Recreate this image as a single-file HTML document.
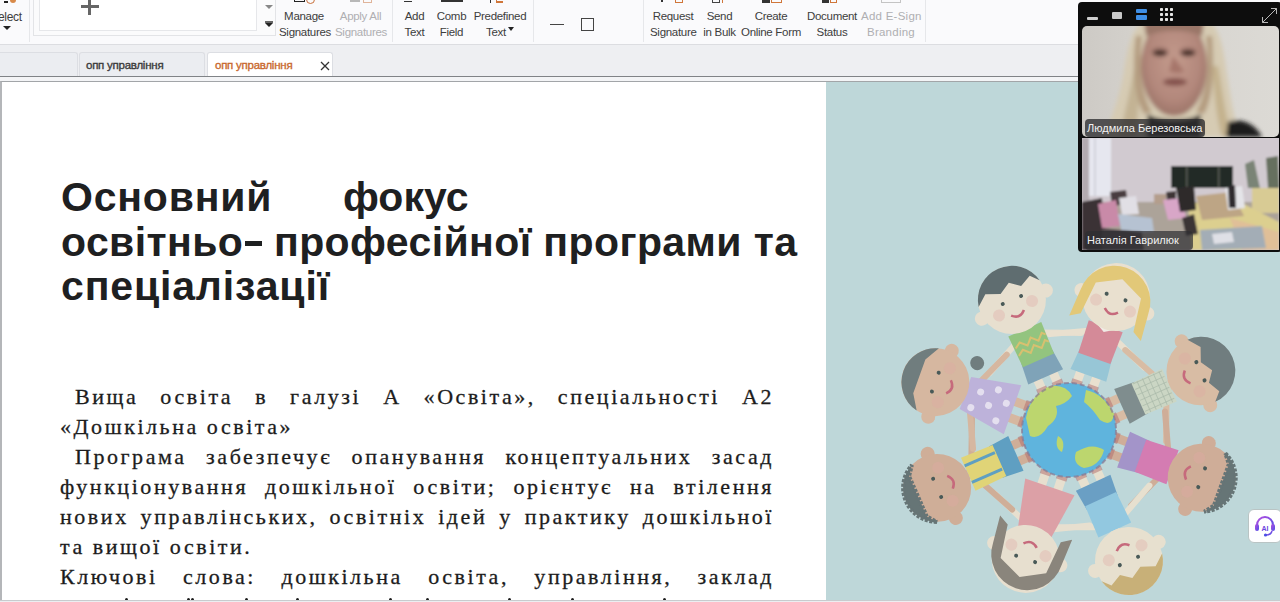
<!DOCTYPE html>
<html><head><meta charset="utf-8">
<style>
*{margin:0;padding:0;box-sizing:border-box}
html,body{width:1280px;height:602px;overflow:hidden;background:#eef0f3;font-family:"Liberation Sans",sans-serif}
.abs{position:absolute}
#toolbar{position:absolute;left:0;top:0;width:1280px;height:45px;background:#fafafc;border-bottom:1px solid #dcdde1}
.lbl{position:absolute;font-size:11.5px;line-height:15.5px;color:#3d3d3d;letter-spacing:-0.3px;text-align:center;white-space:nowrap}
.gray{color:#afafb2}
.sep{position:absolute;top:0;width:1px;height:42px;background:#e6e7ea}
#tabbar{position:absolute;left:0;top:45px;width:1280px;height:36px;background:#eeeff2}
.tab{position:absolute;top:7px;height:24px;background:#ebedf1;border:1px solid #dcdee3;border-bottom:none;border-radius:3px 3px 0 0;font-size:11.5px;line-height:25px;color:#3a3a3a;font-weight:normal;letter-spacing:-0.25px;-webkit-text-stroke:0.35px}
#page{position:absolute;left:0;top:81px;width:1280px;height:519px;background:#fff;border-top:1px solid #a2a5a8;border-left:2px solid #b4b6b9}
#bottom{position:absolute;left:0;top:600px;width:1280px;height:2px;background:#eceef1;border-top:1px solid #c9cbce}
.tl{position:absolute;left:59px;font-family:"Liberation Sans",sans-serif;font-weight:bold;font-size:41px;line-height:44px;color:#1e2021;white-space:nowrap}
.bl{position:absolute;left:58px;width:714px;font-family:"Liberation Serif",serif;font-size:22px;line-height:30px;color:#1c1c1c;letter-spacing:2.55px;-webkit-text-stroke:0.3px #1c1c1c;white-space:nowrap}
.j{text-align:justify;text-align-last:justify}
</style></head><body>
<div id="toolbar">
  <div class="abs" style="left:4px;top:1px;width:4px;height:2px;background:#222"></div><div class="abs" style="left:10px;top:-2px;width:6px;height:5px;background:#d88a4a;border-radius:0 0 3px 3px"></div>
  <div class="abs" style="left:294px;top:-2px;width:11px;height:4px;border:1.5px solid #222;border-top:none"></div><div class="abs" style="left:306px;top:-5px;width:9px;height:9px;border:1.5px solid #c8703a;border-radius:50%"></div>
  <div class="abs" style="left:350px;top:0;width:10px;height:2px;background:#b8b8b8"></div><div class="abs" style="left:363px;top:-3px;width:9px;height:6px;border:1px solid #e0b49a"></div>
  <div class="abs" style="left:404px;top:0;width:8px;height:2px;border-bottom:1px solid #333"></div>
  <div class="abs" style="left:441px;top:0;width:22px;height:2px;background:#333"></div>
  <div class="abs" style="left:490px;top:0;width:1px;height:3px;background:#333"></div><div class="abs" style="left:496px;top:0;width:7px;height:3px;border-bottom:2px solid #d0763a;border-left:1px solid #d0763a"></div>
  <div class="abs" style="left:661px;top:0;width:2px;height:2px;background:#333"></div><div class="abs" style="left:675px;top:-3px;width:8px;height:6px;border:1.5px solid #d0763a"></div>
  <div class="abs" style="left:712px;top:-3px;width:8px;height:6px;border:1px solid #444;border-top:none"></div><div class="abs" style="left:722px;top:0;width:6px;height:3px;border-left:1.5px solid #d0763a"></div>
  <div class="abs" style="left:762px;top:0;width:8px;height:3px;background:#333"></div><div class="abs" style="left:771px;top:-3px;width:11px;height:6px;border:1.5px solid #d0763a"></div>
  <div class="abs" style="left:822px;top:0;width:7px;height:3px;background:#333"></div><div class="abs" style="left:830px;top:-3px;width:7px;height:6px;border:1.5px solid #d0763a"></div>
  <div class="abs" style="left:881px;top:-3px;width:20px;height:6px;border:1px solid #c4c4c4"></div>
  <div class="lbl" style="left:-2px;top:10px;text-align:left;font-size:12px">elect</div>
  <div class="abs" style="left:3px;top:26px;width:0;height:0;border-left:4px solid transparent;border-right:4px solid transparent;border-top:4px solid #222"></div>
  <div class="sep" style="left:29px"></div>
  <div class="abs" style="left:33px;top:-2px;width:243px;height:38px;border:1px solid #e3e4e7;background:#fbfbfc"></div>
  <div class="abs" style="left:39px;top:-2px;width:218px;height:33px;border:1px solid #e6e7ea;background:#fff"></div>
  <div class="abs" style="left:81px;top:5px;width:18px;height:3px;background:#666"></div>
  <div class="abs" style="left:88px;top:-2px;width:3px;height:17px;background:#666"></div>
  <div class="abs" style="left:265px;top:5px;width:0;height:0;border-left:4px solid transparent;border-right:4px solid transparent;border-top:4px solid #888"></div>
  <div class="abs" style="left:265px;top:21px;width:8px;height:2px;background:#666"></div>
  <div class="abs" style="left:265px;top:23px;width:0;height:0;border-left:4px solid transparent;border-right:4px solid transparent;border-top:4px solid #222"></div>
  <div class="lbl" style="left:279px;top:9px;width:50px">Manage<br>Signatures</div>
  <div class="lbl gray" style="left:335px;top:9px;width:51px">Apply All<br>Signatures</div>
  <div class="sep" style="left:392px"></div>
  <div class="lbl" style="left:402px;top:9px;width:25px">Add<br>Text</div>
  <div class="lbl" style="left:436px;top:9px;width:31px">Comb<br>Field</div>
  <div class="lbl" style="left:473px;top:9px;width:54px">Predefined<br>Text<span style="display:inline-block;margin-left:2px;width:0;height:0;border-left:3.5px solid transparent;border-right:3.5px solid transparent;border-top:4px solid #222;vertical-align:5px"></span></div>
  <div class="sep" style="left:533px"></div>
  <div class="abs" style="left:550px;top:24px;width:14px;height:1px;background:#444"></div>
  <div class="abs" style="left:581px;top:18px;width:13px;height:13px;border:1px solid #444"></div>
  <div class="sep" style="left:643px"></div>
  <div class="lbl" style="left:650px;top:9px;width:46px">Request<br>Signature</div>
  <div class="lbl" style="left:702px;top:9px;width:35px">Send<br>in Bulk</div>
  <div class="lbl" style="left:741px;top:9px;width:60px">Create<br>Online Form</div>
  <div class="lbl" style="left:806px;top:9px;width:52px">Document<br>Status</div>
  <div class="lbl gray" style="left:861px;top:9px;width:60px;letter-spacing:0.25px">Add E-Sign<br>Branding</div>
  <div class="sep" style="left:925px"></div>
</div>
<div id="tabbar">
  <div class="tab" style="left:-4px;width:82px"></div>
  <div class="tab" style="left:79px;width:126px;padding-left:6px">опп управління</div>
  <div class="tab" style="left:207px;width:126px;padding-left:7px;background:#fff;color:#c8682e">опп управління<svg style="position:absolute;left:112px;top:8px" width="10" height="10" viewBox="0 0 10 10"><path d="M1 1L9 9M9 1L1 9" stroke="#333" stroke-width="1.3"/></svg></div>
  <div class="abs" style="left:0;top:31px;width:1280px;height:1px;background:#808387"></div><div class="abs" style="left:0;top:32px;width:1280px;height:4px;background:#f3f4f6"></div>
</div>
<div id="page">
  <div class="abs" style="left:824px;top:0;width:456px;height:519px;background:#bed7d9"></div>
  <div id="title">
    <div class="tl" style="top:93px;letter-spacing:0.8px">Основний</div>
    <div class="tl" style="top:93px;left:341px;letter-spacing:0px">фокус</div>
    <div class="tl" style="top:138px;letter-spacing:0.4px">освітньо<span style="display:inline-block;width:17px;height:5px;background:#1e2021;vertical-align:10px;margin:0 0 0 2px"></span> професійної програми та</div>
    <div class="tl" style="top:182px;letter-spacing:0.85px">спеціалізації</div>
  </div>
  <div id="body">
    <div class="bl j" style="top:300px"><span style="display:inline-block;width:15px"></span>Вища освіта в галузі А «Освіта», спеціальності А2</div>
    <div class="bl" style="top:330px">«Дошкільна освіта»</div>
    <div class="bl j" style="top:360px"><span style="display:inline-block;width:15px"></span>Програма забезпечує опанування концептуальних засад</div>
    <div class="bl j" style="top:390px">функціонування дошкільної освіти; орієнтує на втілення</div>
    <div class="bl j" style="top:420px">нових управлінських, освітніх ідей у практику дошкільної</div>
    <div class="bl" style="top:450px">та вищої освіти.</div>
    <div class="bl j" style="top:480px">Ключові слова: дошкільна освіта, управління, заклад</div>
    <div class="abs" style="left:123.0px;top:516px;width:3px;height:3px;border-radius:50%;background:#1c1c1c"></div><div class="abs" style="left:185.0px;top:516px;width:3px;height:3px;border-radius:50%;background:#1c1c1c"></div><div class="abs" style="left:188.5px;top:516px;width:3px;height:3px;border-radius:50%;background:#1c1c1c"></div><div class="abs" style="left:242.5px;top:516px;width:3px;height:3px;border-radius:50%;background:#1c1c1c"></div><div class="abs" style="left:293.5px;top:516px;width:3px;height:3px;border-radius:50%;background:#1c1c1c"></div><div class="abs" style="left:387.0px;top:516px;width:3px;height:3px;border-radius:50%;background:#1c1c1c"></div><div class="abs" style="left:423.5px;top:516px;width:3px;height:3px;border-radius:50%;background:#1c1c1c"></div><div class="abs" style="left:505.5px;top:516px;width:3px;height:3px;border-radius:50%;background:#1c1c1c"></div><div class="abs" style="left:568.5px;top:516px;width:3px;height:3px;border-radius:50%;background:#1c1c1c"></div><div class="abs" style="left:660.5px;top:516px;width:3px;height:3px;border-radius:50%;background:#1c1c1c"></div>
  </div>
</div>
<!--KIDS--><svg class="abs" style="left:0;top:0" width="1280" height="602" viewBox="0 0 1280 602">
<defs><filter id="soft" x="-5%" y="-5%" width="110%" height="110%"><feGaussianBlur stdDeviation="0.7"/></filter><clipPath id="pg"><rect x="826" y="83" width="454" height="517"/></clipPath></defs>
<g clip-path="url(#pg)" filter="url(#soft)">
<g transform="translate(1069 430) rotate(-23.7)">
<path d="M-15 -100 L-50 -84 M15 -100 L50 -84" stroke="#e7dfcf" stroke-width="6" stroke-linecap="round" fill="none"/>
<rect x="-13" y="-62" width="9" height="16" fill="#e7dfcf"/><rect x="4" y="-62" width="9" height="16" fill="#e7dfcf"/>
<rect x="-14" y="-50" width="11" height="5" fill="#b06a6a" opacity="0.5"/><rect x="3" y="-50" width="11" height="5" fill="#b06a6a" opacity="0.5"/>
<path d="M-17 -80 L17 -80 L19 -58 L-19 -58 Z" fill="#7fa3b8"/>
<path d="M-18 -110 L18 -110 L17 -76 L-17 -76 Z" fill="#93c47f"/>
<path d="M-16 -96 L-10 -100 L-4 -94 L2 -100 L8 -94 L14 -100 L17 -97 M-16 -88 L-10 -92 L-4 -86 L2 -92 L8 -86 L14 -92 L17 -89" stroke="#d8c070" stroke-width="2" fill="none"/>
<rect x="-5" y="-118" width="10" height="8" fill="#e7dfcf"/>
<g transform="translate(0 3)">
<circle cx="-35" cy="-140" r="7" fill="#e7dfcf"/><circle cx="35" cy="-140" r="7" fill="#e7dfcf"/>
<circle cx="0" cy="-145" r="34" fill="#e7dfcf"/>
<path d="M-33.3 -152 A34 34 0 0 1 33.3 -152 L26 -160 L14 -154 L4 -162 L-8 -155 L-22 -161 Z" fill="#5f6d70"/>
<circle cx="-18" cy="-136" r="6" fill="#e0aaa4" opacity="0.35"/><circle cx="18" cy="-136" r="6" fill="#e0aaa4" opacity="0.35"/>
<circle cx="-10" cy="-145" r="2" fill="#4a5a58"/><circle cx="10" cy="-145" r="2" fill="#4a5a58"/>
<path d="M-7 -131 Q0 -124 7 -131" stroke="#c66a7c" stroke-width="2.5" fill="none"/>
</g>
</g>
<g transform="translate(1069 430) rotate(19.5)">
<path d="M-15 -100 L-50 -84 M15 -100 L50 -84" stroke="#e9e0cf" stroke-width="6" stroke-linecap="round" fill="none"/>
<rect x="-13" y="-62" width="9" height="16" fill="#e9e0cf"/><rect x="4" y="-62" width="9" height="16" fill="#e9e0cf"/>
<rect x="-14" y="-50" width="11" height="5" fill="#b06a6a" opacity="0.5"/><rect x="3" y="-50" width="11" height="5" fill="#b06a6a" opacity="0.5"/>
<path d="M-17 -80 L17 -80 L19 -58 L-19 -58 Z" fill="#97c6d6"/>
<path d="M-18 -110 L18 -110 L17 -76 L-17 -76 Z" fill="#d48a98"/>
<path d="M-10 -110 L0 -104 L10 -110 Z" fill="#f0ece6"/>
<rect x="-5" y="-118" width="10" height="8" fill="#e9e0cf"/>
<g transform="translate(0 4)">
<circle cx="-35" cy="-140" r="7" fill="#e9e0cf"/><circle cx="35" cy="-140" r="7" fill="#e9e0cf"/>
<circle cx="0" cy="-145" r="34" fill="#e9e0cf"/>
<path d="M-36 -140 A36 36 0 0 1 36 -140 L38 -112 L28 -118 L24 -152 L0 -164 L-24 -152 L-28 -118 L-38 -112 Z" fill="#e2c878"/>
<circle cx="-18" cy="-136" r="6" fill="#e0aaa4" opacity="0.35"/><circle cx="18" cy="-136" r="6" fill="#e0aaa4" opacity="0.35"/>
<circle cx="-10" cy="-145" r="2" fill="#4a5a58"/><circle cx="10" cy="-145" r="2" fill="#4a5a58"/>
<path d="M-7 -131 Q0 -124 7 -131" stroke="#c66a7c" stroke-width="2.5" fill="none"/>
</g>
</g>
<g transform="translate(1069 430) rotate(65.9)">
<path d="M-15 -100 L-50 -84 M15 -100 L50 -84" stroke="#d8bca4" stroke-width="6" stroke-linecap="round" fill="none"/>
<rect x="-13" y="-62" width="9" height="16" fill="#d8bca4"/><rect x="4" y="-62" width="9" height="16" fill="#d8bca4"/>
<rect x="-14" y="-50" width="11" height="5" fill="#b06a6a" opacity="0.5"/><rect x="3" y="-50" width="11" height="5" fill="#b06a6a" opacity="0.5"/>
<path d="M-17 -80 L17 -80 L19 -58 L-19 -58 Z" fill="#7f8d8e"/>
<path d="M-18 -110 L18 -110 L17 -76 L-17 -76 Z" fill="#cbd6c4"/>
<line x1="-16" y1="-109" x2="-16" y2="-77" stroke="#a8b8a8" stroke-width="1" opacity="0.7"/>
<line x1="-10" y1="-109" x2="-10" y2="-77" stroke="#a8b8a8" stroke-width="1" opacity="0.7"/>
<line x1="-4" y1="-109" x2="-4" y2="-77" stroke="#a8b8a8" stroke-width="1" opacity="0.7"/>
<line x1="2" y1="-109" x2="2" y2="-77" stroke="#a8b8a8" stroke-width="1" opacity="0.7"/>
<line x1="8" y1="-109" x2="8" y2="-77" stroke="#a8b8a8" stroke-width="1" opacity="0.7"/>
<line x1="14" y1="-109" x2="14" y2="-77" stroke="#a8b8a8" stroke-width="1" opacity="0.7"/>
<line x1="-17" y1="-106" x2="17" y2="-106" stroke="#a8b8a8" stroke-width="1" opacity="0.7"/>
<line x1="-17" y1="-100" x2="17" y2="-100" stroke="#a8b8a8" stroke-width="1" opacity="0.7"/>
<line x1="-17" y1="-94" x2="17" y2="-94" stroke="#a8b8a8" stroke-width="1" opacity="0.7"/>
<line x1="-17" y1="-88" x2="17" y2="-88" stroke="#a8b8a8" stroke-width="1" opacity="0.7"/>
<line x1="-17" y1="-82" x2="17" y2="-82" stroke="#a8b8a8" stroke-width="1" opacity="0.7"/>
<rect x="-5" y="-118" width="10" height="8" fill="#d8bca4"/>
<g transform="translate(0 1)">
<circle cx="-35" cy="-140" r="7" fill="#d8bca4"/><circle cx="35" cy="-140" r="7" fill="#d8bca4"/>
<circle cx="0" cy="-145" r="34" fill="#d8bca4"/>
<path d="M-34.0 -146 A34 34 0 0 1 34.0 -146 L26 -154 L14 -148 L4 -156 L-8 -149 L-22 -155 Z" fill="#707d7f"/>
<circle cx="-18" cy="-136" r="6" fill="#e0aaa4" opacity="0.35"/><circle cx="18" cy="-136" r="6" fill="#e0aaa4" opacity="0.35"/>
<circle cx="-10" cy="-145" r="2" fill="#4a5a58"/><circle cx="10" cy="-145" r="2" fill="#4a5a58"/>
<path d="M-7 -131 Q0 -124 7 -131" stroke="#c66a7c" stroke-width="2.5" fill="none"/>
</g>
</g>
<g transform="translate(1069 430) rotate(109.8)">
<path d="M-15 -100 L-50 -84 M15 -100 L50 -84" stroke="#cfad98" stroke-width="6" stroke-linecap="round" fill="none"/>
<rect x="-13" y="-62" width="9" height="16" fill="#cfad98"/><rect x="4" y="-62" width="9" height="16" fill="#cfad98"/>
<rect x="-14" y="-50" width="11" height="5" fill="#b06a6a" opacity="0.5"/><rect x="3" y="-50" width="11" height="5" fill="#b06a6a" opacity="0.5"/>
<path d="M-17 -80 L17 -80 L19 -58 L-19 -58 Z" fill="#a394c9"/>
<path d="M-18 -110 L18 -110 L17 -76 L-17 -76 Z" fill="#d47bb2"/>
<rect x="-5" y="-118" width="10" height="8" fill="#cfad98"/>
<g transform="translate(0 4)">
<circle cx="-35" cy="-140" r="7" fill="#cfad98"/><circle cx="35" cy="-140" r="7" fill="#cfad98"/>
<circle cx="0" cy="-145" r="34" fill="#cfad98"/>
<path d="M-31 -159 A34 34 0 0 1 31 -159 L22 -166 L-22 -166 Z" fill="#667476" stroke="#667476" stroke-width="4" stroke-dasharray="3 1.5"/>
<circle cx="-18" cy="-136" r="6" fill="#e0aaa4" opacity="0.35"/><circle cx="18" cy="-136" r="6" fill="#e0aaa4" opacity="0.35"/>
<circle cx="-10" cy="-145" r="2" fill="#4a5a58"/><circle cx="10" cy="-145" r="2" fill="#4a5a58"/>
<path d="M-7 -131 Q0 -124 7 -131" stroke="#c66a7c" stroke-width="2.5" fill="none"/>
</g>
</g>
<g transform="translate(1069 430) rotate(155.4)">
<path d="M-15 -100 L-50 -84 M15 -100 L50 -84" stroke="#e7e0cf" stroke-width="6" stroke-linecap="round" fill="none"/>
<rect x="-13" y="-62" width="9" height="16" fill="#e7e0cf"/><rect x="4" y="-62" width="9" height="16" fill="#e7e0cf"/>
<rect x="-14" y="-50" width="11" height="5" fill="#b06a6a" opacity="0.5"/><rect x="3" y="-50" width="11" height="5" fill="#b06a6a" opacity="0.5"/>
<path d="M-17 -80 L17 -80 L19 -58 L-19 -58 Z" fill="#6a9fc4"/>
<path d="M-18 -110 L18 -110 L17 -76 L-17 -76 Z" fill="#92c8e0"/>
<rect x="-5" y="-118" width="10" height="8" fill="#e7e0cf"/>
<g transform="translate(0 1)">
<circle cx="-35" cy="-140" r="7" fill="#e7e0cf"/><circle cx="35" cy="-140" r="7" fill="#e7e0cf"/>
<circle cx="0" cy="-145" r="34" fill="#e7e0cf"/>
<path d="M-33.3 -152 A34 34 0 0 1 33.3 -152 L26 -160 L14 -154 L4 -162 L-8 -155 L-22 -161 Z" fill="#c8b078"/>
<circle cx="-18" cy="-136" r="6" fill="#e0aaa4" opacity="0.35"/><circle cx="18" cy="-136" r="6" fill="#e0aaa4" opacity="0.35"/>
<circle cx="-10" cy="-145" r="2" fill="#4a5a58"/><circle cx="10" cy="-145" r="2" fill="#4a5a58"/>
<path d="M-7 -131 Q0 -124 7 -131" stroke="#c66a7c" stroke-width="2.5" fill="none"/>
</g>
</g>
<g transform="translate(1069 430) rotate(-161.4)">
<path d="M-15 -100 L-50 -84 M15 -100 L50 -84" stroke="#e7dfcf" stroke-width="6" stroke-linecap="round" fill="none"/>
<rect x="-13" y="-62" width="9" height="16" fill="#e7dfcf"/><rect x="4" y="-62" width="9" height="16" fill="#e7dfcf"/>
<rect x="-14" y="-50" width="11" height="5" fill="#b06a6a" opacity="0.5"/><rect x="3" y="-50" width="11" height="5" fill="#b06a6a" opacity="0.5"/>
<path d="M-17 -110 L17 -110 L26 -60 L-26 -60 Z" fill="#dca0a6"/>
<rect x="-5" y="-118" width="10" height="8" fill="#e7dfcf"/>
<g transform="translate(0 9)">
<circle cx="-35" cy="-140" r="7" fill="#e7dfcf"/><circle cx="35" cy="-140" r="7" fill="#e7dfcf"/>
<circle cx="0" cy="-145" r="34" fill="#e7dfcf"/>
<path d="M-36 -140 A36 36 0 0 1 36 -140 L38 -112 L28 -118 L24 -152 L0 -164 L-24 -152 L-28 -118 L-38 -112 Z" fill="#8a857c"/>
<circle cx="-18" cy="-136" r="6" fill="#e0aaa4" opacity="0.35"/><circle cx="18" cy="-136" r="6" fill="#e0aaa4" opacity="0.35"/>
<circle cx="-10" cy="-145" r="2" fill="#4a5a58"/><circle cx="10" cy="-145" r="2" fill="#4a5a58"/>
<path d="M-7 -131 Q0 -124 7 -131" stroke="#c66a7c" stroke-width="2.5" fill="none"/>
</g>
</g>
<g transform="translate(1069 430) rotate(-113.7)">
<path d="M-15 -100 L-50 -84 M15 -100 L50 -84" stroke="#cfae98" stroke-width="6" stroke-linecap="round" fill="none"/>
<rect x="-13" y="-62" width="9" height="16" fill="#cfae98"/><rect x="4" y="-62" width="9" height="16" fill="#cfae98"/>
<rect x="-14" y="-50" width="11" height="5" fill="#b06a6a" opacity="0.5"/><rect x="3" y="-50" width="11" height="5" fill="#b06a6a" opacity="0.5"/>
<path d="M-17 -80 L17 -80 L19 -58 L-19 -58 Z" fill="#5e9fc2"/>
<path d="M-18 -110 L18 -110 L17 -76 L-17 -76 Z" fill="#e0d477"/>
<line x1="-9" y1="-110" x2="-9" y2="-77" stroke="#5e9fc2" stroke-width="3"/><line x1="9" y1="-110" x2="9" y2="-77" stroke="#5e9fc2" stroke-width="3"/>
<rect x="-5" y="-118" width="10" height="8" fill="#cfae98"/>
<g transform="translate(0 1)">
<circle cx="-35" cy="-140" r="7" fill="#cfae98"/><circle cx="35" cy="-140" r="7" fill="#cfae98"/>
<circle cx="0" cy="-145" r="34" fill="#cfae98"/>
<path d="M-31 -159 A34 34 0 0 1 31 -159 L22 -166 L-22 -166 Z" fill="#667476" stroke="#667476" stroke-width="4" stroke-dasharray="3 1.5"/>
<circle cx="-18" cy="-136" r="6" fill="#e0aaa4" opacity="0.35"/><circle cx="18" cy="-136" r="6" fill="#e0aaa4" opacity="0.35"/>
<circle cx="-10" cy="-145" r="2" fill="#4a5a58"/><circle cx="10" cy="-145" r="2" fill="#4a5a58"/>
<path d="M-7 -131 Q0 -124 7 -131" stroke="#c66a7c" stroke-width="2.5" fill="none"/>
</g>
</g>
<g transform="translate(1069 430) rotate(-70.3)">
<path d="M-15 -100 L-50 -84 M15 -100 L50 -84" stroke="#d6b7a0" stroke-width="6" stroke-linecap="round" fill="none"/>
<rect x="-13" y="-62" width="9" height="16" fill="#d6b7a0"/><rect x="4" y="-62" width="9" height="16" fill="#d6b7a0"/>
<rect x="-14" y="-50" width="11" height="5" fill="#b06a6a" opacity="0.5"/><rect x="3" y="-50" width="11" height="5" fill="#b06a6a" opacity="0.5"/>
<path d="M-17 -110 L17 -110 L26 -60 L-26 -60 Z" fill="#bdb2da"/>
<circle cx="-12" cy="-100" r="3.5" fill="#eeeaf4" opacity="0.8"/>
<circle cx="6" cy="-96" r="3.5" fill="#eeeaf4" opacity="0.8"/>
<circle cx="-4" cy="-84" r="3.5" fill="#eeeaf4" opacity="0.8"/>
<circle cx="14" cy="-80" r="3.5" fill="#eeeaf4" opacity="0.8"/>
<circle cx="-16" cy="-72" r="3.5" fill="#eeeaf4" opacity="0.8"/>
<circle cx="4" cy="-68" r="3.5" fill="#eeeaf4" opacity="0.8"/>
<rect x="-5" y="-118" width="10" height="8" fill="#d6b7a0"/>
<g transform="translate(0 3)">
<circle cx="-35" cy="-140" r="7" fill="#d6b7a0"/><circle cx="35" cy="-140" r="7" fill="#d6b7a0"/>
<circle cx="0" cy="-145" r="34" fill="#d6b7a0"/>
<path d="M-33 -153 A34 34 0 0 1 33 -153 L18 -162 L-18 -162 Z" fill="#6f7d7e"/>
<circle cx="32" cy="-112" r="7" fill="#6f7d7e"/>
<circle cx="-18" cy="-136" r="6" fill="#e0aaa4" opacity="0.35"/><circle cx="18" cy="-136" r="6" fill="#e0aaa4" opacity="0.35"/>
<circle cx="-10" cy="-145" r="2" fill="#4a5a58"/><circle cx="10" cy="-145" r="2" fill="#4a5a58"/>
<path d="M-7 -131 Q0 -124 7 -131" stroke="#c66a7c" stroke-width="2.5" fill="none"/>
</g>
</g>
<circle cx="1069" cy="430" r="47" fill="#5fb4dd"/>
<path d="M1026 418 Q1030 395 1050 386 Q1066 384 1072 396 Q1066 404 1056 406 Q1060 418 1048 426 Q1040 440 1030 436 Z" fill="#bcd66e"/>
<path d="M1076 452 Q1092 442 1104 450 Q1100 466 1084 468 Q1072 464 1076 452 Z" fill="#bcd66e"/>
<path d="M1086 390 Q1104 394 1114 414 Q1112 428 1100 420 Q1092 408 1084 402 Z" fill="#bcd66e"/>
<path d="M1058 436 Q1066 440 1062 452 Q1054 448 1058 436 Z" fill="#bcd66e"/>
<circle cx="1069" cy="430" r="47" fill="none" stroke="#8a7890" stroke-width="2" stroke-dasharray="5 3" opacity="0.7"/>
</g></svg><!--/KIDS-->
<div id="bottom"></div>
<!--VIDEO--><div id="video" class="abs" style="left:1078px;top:2px;width:204px;height:250px;background:#0d0d0d;border-radius:4px;overflow:hidden">
  <div class="abs" style="left:9px;top:15px;width:11px;height:3px;background:#cfcfcf;border-radius:1px"></div>
  <div class="abs" style="left:34px;top:10px;width:10px;height:7px;background:#c8c8c8;border-radius:1px"></div>
  <div class="abs" style="left:58px;top:7px;width:11px;height:4px;background:#3f8fe6;border-radius:1px"></div>
  <div class="abs" style="left:58px;top:13px;width:11px;height:5px;background:#3f8fe6;border-radius:1px"></div>
  <svg class="abs" style="left:82px;top:6px" width="14" height="14" viewBox="0 0 14 14"><g fill="#e6e6e6"><rect x="0" y="0" width="3" height="3" rx="0.8"/><rect x="5" y="0" width="3" height="3" rx="0.8"/><rect x="10" y="0" width="3" height="3" rx="0.8"/><rect x="0" y="5" width="3" height="3" rx="0.8"/><rect x="5" y="5" width="3" height="3" rx="0.8"/><rect x="10" y="5" width="3" height="3" rx="0.8"/><rect x="0" y="10" width="3" height="3" rx="0.8"/><rect x="5" y="10" width="3" height="3" rx="0.8"/><rect x="10" y="10" width="3" height="3" rx="0.8"/></g></svg>
  <svg class="abs" style="left:182px;top:3px" width="18" height="19" viewBox="0 0 18 19"><g stroke="#b8b8b8" stroke-width="1" fill="none"><path d="M2.5 17.5 L16.5 3.5"/><path d="M11 3.5 H16.5 V9"/><path d="M2.5 12 V17.5 H8"/></g></svg>
  <!-- video 1 -->
  <div class="abs" style="left:4px;top:24px;width:197px;height:111px;border-radius:5px;overflow:hidden;background:linear-gradient(90deg,#cdcac5 0%,#d6d3ce 35%,#dcdad5 100%)">
    <svg width="197" height="111" viewBox="0 0 197 111" style="position:absolute;left:0;top:0">
      <defs><filter id="vb"><feGaussianBlur stdDeviation="2"/></filter><radialGradient id="fg" cx="0.5" cy="0.45" r="0.55"><stop offset="0" stop-color="#c39a8c"/><stop offset="0.7" stop-color="#b3887c"/><stop offset="1" stop-color="#9c7468"/></radialGradient></defs>
      <g filter="url(#vb)">
        <path d="M22 111 C30 90 38 70 42 45 C46 20 50 2 62 -4 L128 -4 C140 5 142 30 146 55 C150 80 152 95 160 111 Z" fill="#d6cbb3"/>
        <path d="M40 100 C44 80 50 60 54 30 L62 30 C58 60 56 85 54 111 L38 111 Z" fill="#c3b394"/>
        <path d="M136 40 C140 60 142 85 150 111 L140 111 C134 90 132 65 130 40 Z" fill="#c4b28e"/>
        <ellipse cx="92" cy="40" rx="33" ry="50" fill="url(#fg)"/>
        <path d="M62 -4 L122 -4 L120 10 C104 3 80 3 64 10 Z" fill="#9a7668"/>
        <path d="M60 10 C56 40 60 70 70 86 L62 88 C52 70 50 40 54 10 Z" fill="#b49c80"/>
        <path d="M124 10 C128 40 124 70 114 86 L122 88 C132 70 132 40 130 10 Z" fill="#b49c80"/>
        <ellipse cx="78" cy="26" rx="9" ry="5" fill="#9a7066" opacity="0.8"/><ellipse cx="78" cy="27" rx="7" ry="3.2" fill="#4a302c"/>
        <ellipse cx="106" cy="26" rx="9" ry="5" fill="#9a7066" opacity="0.8"/><ellipse cx="106" cy="27" rx="7" ry="3.2" fill="#4a302c"/>
        <path d="M91 30 L87 45 C92 48 99 48 102 45 Z" fill="#a6766a"/>
        <ellipse cx="93" cy="56" rx="12" ry="4" fill="#85534e"/>
        <path d="M66 88 C76 96 108 96 118 88 L120 111 L64 111 Z" fill="#231e1e"/>
        <path d="M146 96 C158 92 172 96 180 111 L144 111 Z" fill="#1f1c1c"/>
      </g>
    </svg>
    <div class="abs" style="left:3px;top:93px;width:120px;height:18px;background:rgba(45,45,48,0.78);border-radius:4px"></div>
    <div class="abs" style="left:5px;top:95px;font-size:11px;line-height:14px;color:#f2f2f2;white-space:nowrap">Людмила Березовська</div>
  </div>
  <!-- video 2 -->
  <div class="abs" style="left:4px;top:136px;width:197px;height:112px;overflow:hidden;background:#cfc8ce">
    <svg width="197" height="112" viewBox="0 0 197 112" style="position:absolute;left:0;top:0">
      <defs><filter id="vb2" x="-10%" y="-10%" width="120%" height="120%"><feGaussianBlur stdDeviation="1.3"/></filter></defs>
      <g filter="url(#vb2)">
        <rect x="0" y="0" width="197" height="70" fill="#d1cad0"/>
        <rect x="0" y="0" width="7" height="112" fill="#b3abb0"/>
        <rect x="7" y="0" width="22" height="58" fill="#e6e7ef"/>
        <rect x="12" y="0" width="2" height="58" fill="#d2d3dc"/>
        <rect x="89" y="28" width="62" height="22" fill="#202a28"/>
        <rect x="104" y="28" width="1.5" height="22" fill="#5a5c55"/><rect x="136" y="28" width="1.5" height="22" fill="#5a5c55"/>
        <rect x="0" y="64" width="197" height="48" fill="#aca399"/>
        <path d="M163 26 L172 22 L178 50 L166 50 Z" fill="#7a8476"/>
        <path d="M184 20 L196 18 L197 50 L186 50 Z" fill="#66705f"/>
        <rect x="170" y="50" width="27" height="25" fill="#d8cb94"/>
        <path d="M106 66 L150 60 L197 84 L197 112 L110 112 Z" fill="#dccf8f"/>
        <path d="M148 80 L197 94 L197 112 L160 112 Z" fill="#e0bf98"/>
        <path d="M114 58 L150 54 L162 78 L120 82 Z" fill="#bda585"/>
        <path d="M118 92 L180 88 L184 110 L120 112 Z" fill="#a3adb6"/>
        <path d="M130 96 L150 94 L152 104 L132 106 Z" fill="#dfe0e6"/>
        <rect x="72" y="56" width="12" height="10" fill="#b49e8c"/>
        <path d="M0 64 L20 60 L24 112 L0 112 Z" fill="#3a3236"/>
        <path d="M28 54 L44 52 L46 66 L30 68 Z" fill="#4a3e40"/>
        <path d="M16 66 L34 62 L38 88 L20 90 Z" fill="#c98aa8"/>
        <path d="M37 60 L54 58 L57 76 L40 77 Z" fill="#e1dfe5"/>
        <path d="M36 76 L70 80 L72 94 L40 96 Z" fill="#b6c2d2"/>
        <path d="M20 90 L60 94 L62 112 L20 112 Z" fill="#4e4548"/>
        <path d="M84 54 L94 53 L94 62 L85 63 Z" fill="#3e3436"/>
        <path d="M81 62 L100 60 L104 80 L86 82 Z" fill="#d8a6c7"/>
        <path d="M94 50 L112 48 L114 72 L98 74 Z" fill="#2f2a2c"/>
        <path d="M100 80 L112 76 L116 96 L104 98 Z" fill="#3a3436"/>
        <path d="M143 50 L160 48 L163 70 L146 72 Z" fill="#e4e4e8"/>
        <path d="M146 48 L153 47 L154 70 L147 70 Z" fill="#2e2b2d"/>
      </g>
    </svg>
    <div class="abs" style="left:3px;top:93px;width:108px;height:19px;background:rgba(45,45,50,0.7);border-radius:4px"></div>
    <div class="abs" style="left:5px;top:95px;font-size:11px;line-height:14px;color:#f2f2f2;white-space:nowrap">Наталія Гаврилюк</div>
  </div>
</div>
<div class="abs" style="left:1248px;top:509px;width:34px;height:34px;background:#fff;border:1px solid #b9c4c4;border-radius:6px">
  <svg width="32" height="32" viewBox="0 0 32 32" style="position:absolute;left:0;top:0"><defs><linearGradient id="ai" x1="0" y1="0" x2="1" y2="1"><stop offset="0" stop-color="#b44fe0"/><stop offset="1" stop-color="#4b4fe6"/></linearGradient></defs>
  <path d="M8 19 V15 A8 8 0 0 1 24 15 V19" stroke="url(#ai)" stroke-width="2" fill="none"/>
  <rect x="6" y="14" width="4" height="7" rx="2" fill="url(#ai)"/><rect x="22" y="14" width="4" height="7" rx="2" fill="url(#ai)"/>
  <text x="16" y="20.5" font-size="7" font-family="Liberation Sans" font-weight="bold" text-anchor="middle" fill="#6b45e0">AI</text>
  <path d="M23 21 Q22 25 17 25" stroke="url(#ai)" stroke-width="1.5" fill="none"/><circle cx="16.5" cy="25" r="1.6" fill="#4b4fe6"/></svg>
</div>
<!--/VIDEO-->
</body></html>
